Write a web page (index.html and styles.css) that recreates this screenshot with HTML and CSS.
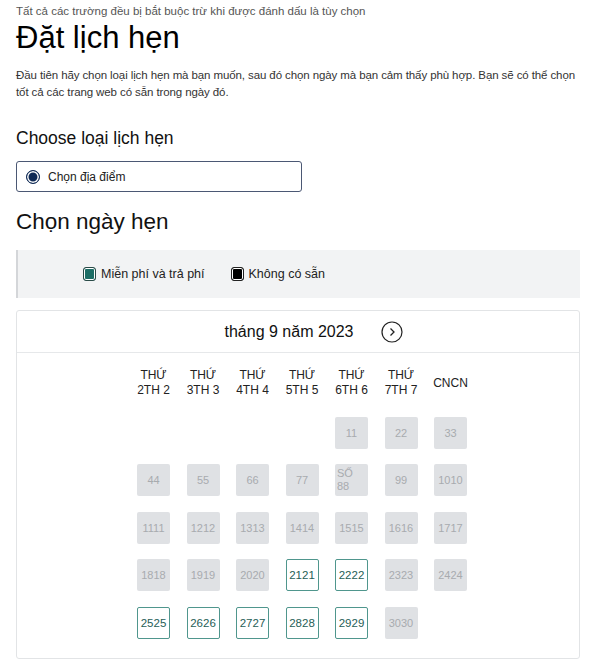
FILE: index.html
```html
<!DOCTYPE html>
<html lang="vi">
  <head>
    <meta charset="UTF-8" />
    <meta name="viewport" content="width=device-width, initial-scale=1.0" />
    <title>Đặt lịch hẹn</title>
    <link rel="stylesheet" href="styles.css">
  </head>
  <body>
    <div class="wrap">
      <p class="note">Tất cả các trường đều bị bắt buộc trừ khi được đánh dấu là tùy chọn</p>
      <h1>Đặt lịch hẹn</h1>
      <p class="intro">Đầu tiên hãy chọn loại lịch hẹn mà bạn muốn, sau đó chọn ngày mà bạn cảm thấy phù hợp. Bạn sẽ có thể chọn tốt cả các trang web có sẵn trong ngày đó.</p>

      <h2>Choose loại lịch hẹn</h2>
      <label class="choice">
        <span class="radio"></span>
        Chọn địa điểm
      </label>

      <h3>Chọn ngày hẹn</h3>
      <div class="legend">
        <span class="key"><i class="sq free"></i>Miễn phí và trả phí</span>
        <span class="key"><i class="sq none"></i>Không có sẵn</span>
      </div>

      <div class="cal">
        <div class="cal-head">
          <span class="month">tháng 9 năm 2023</span>
          <span class="next">
            <svg width="22" height="22" viewBox="0 0 22 22"><circle cx="11" cy="11" r="10" fill="none" stroke="#222" stroke-width="1.2"/><path d="M9.5 7.5 L13 11 L9.5 14.5" fill="none" stroke="#222" stroke-width="1.3"/></svg>
          </span>
        </div>
        <div class="grid">
          <div class="dh">THỨ<br>2TH 2</div>
          <div class="dh">THỨ<br>3TH 3</div>
          <div class="dh">THỨ<br>4TH 4</div>
          <div class="dh">THỨ<br>5TH 5</div>
          <div class="dh">THỨ<br>6TH 6</div>
          <div class="dh">THỨ<br>7TH 7</div>
          <div class="dh">CNCN</div>

          <div></div><div></div><div></div><div></div>
          <div class="d">11</div><div class="d">22</div><div class="d">33</div>

          <div class="d">44</div><div class="d">55</div><div class="d">66</div><div class="d">77</div>
          <div class="d so">SỐ<br>88</div><div class="d">99</div><div class="d">1010</div>

          <div class="d">1111</div><div class="d">1212</div><div class="d">1313</div><div class="d">1414</div>
          <div class="d">1515</div><div class="d">1616</div><div class="d">1717</div>

          <div class="d">1818</div><div class="d">1919</div><div class="d">2020</div><div class="d on">2121</div>
          <div class="d on">2222</div><div class="d">2323</div><div class="d">2424</div>

          <div class="d on">2525</div><div class="d on">2626</div><div class="d on">2727</div><div class="d on">2828</div>
          <div class="d on">2929</div><div class="d">3030</div>
        </div>
      </div>
    </div>
  </body>
</html>
```

FILE: styles.css
```css
* {
  margin: 0;
  padding: 0;
  box-sizing: border-box;
}
body {
  background: #fff;
  color: #111;
  font-family: "Liberation Sans", Arial, sans-serif;
}
.wrap {
  padding: 3px 20px 0 16px;
}
.note {
  font-size: 11.5px;
  line-height: 16px;
  color: #555;
}
h1 {
  font-size: 31px;
  font-weight: 400;
  line-height: 36px;
  margin-top: 1px;
  color: #000;
}
.intro {
  font-size: 11.5px;
  line-height: 17px;
  letter-spacing: -0.1px;
  color: #333;
  margin: 11px -8px 0 0;
}
h2 {
  font-size: 17.5px;
  font-weight: 400;
  line-height: 22px;
  margin-top: 26px;
  color: #111;
}
.choice {
  display: flex;
  align-items: center;
  gap: 8px;
  width: 286px;
  height: 31px;
  margin-top: 12px;
  padding-left: 9px;
  border: 1.5px solid #4b5874;
  border-radius: 3px;
  font-size: 12px;
  color: #222;
}
.radio {
  width: 14px;
  height: 14px;
  border-radius: 50%;
  border: 1.5px solid #0f2a55;
  background: #0f2a55;
  box-shadow: inset 0 0 0 1.5px #fff;
}
h3 {
  font-size: 22.5px;
  font-weight: 400;
  line-height: 28px;
  margin-top: 16px;
  color: #111;
}
.legend {
  display: flex;
  align-items: center;
  gap: 26px;
  height: 48px;
  margin-top: 14px;
  padding-left: 65px;
  background: #f2f3f4;
  border-left: 2px solid #d4d6d9;
  font-size: 12.5px;
  color: #222;
}
.key {
  display: flex;
  align-items: center;
  gap: 5px;
}
.sq {
  width: 13px;
  height: 14px;
  border-radius: 3px;
  border: 1.5px solid #222;
  box-shadow: inset 0 0 0 1px #fff;
}
.sq.free {
  background: #1d6e66;
  border-color: #2a4a47;
}
.sq.none {
  background: #000;
}
.cal {
  margin-top: 12px;
  border: 1px solid #e2e4e6;
  border-radius: 3px;
  height: 349px;
}
.cal-head {
  display: flex;
  align-items: center;
  justify-content: center;
  gap: 27px;
  height: 42px;
  padding-left: 31px;
  border-bottom: 1.5px solid #e6e8ea;
}
.month {
  font-size: 16px;
  color: #111;
}
.next {
  display: flex;
}
.grid {
  display: grid;
  grid-template-columns: repeat(7, 33px);
  column-gap: 16.5px;
  row-gap: 15.5px;
  justify-content: center;
  padding: 15px 0 0 8px;
}
.dh {
  font-size: 12px;
  line-height: 15px;
  text-align: center;
  white-space: nowrap;
  justify-self: center;
  color: #222;
  align-self: center;
  margin-bottom: 3px;
}
.d {
  height: 32px;
  display: flex;
  align-items: center;
  justify-content: center;
  background: #dfe1e4;
  border-radius: 2px;
  font-size: 11px;
  color: #a8abaf;
}
.d.so {
  flex-direction: column;
  align-items: flex-start;
  padding-left: 2px;
  line-height: 13px;
}
.d.on {
  background: #fff;
  border: 1.5px solid #4f968d;
  color: #1f5e57;
  font-size: 11.5px;
}
```
